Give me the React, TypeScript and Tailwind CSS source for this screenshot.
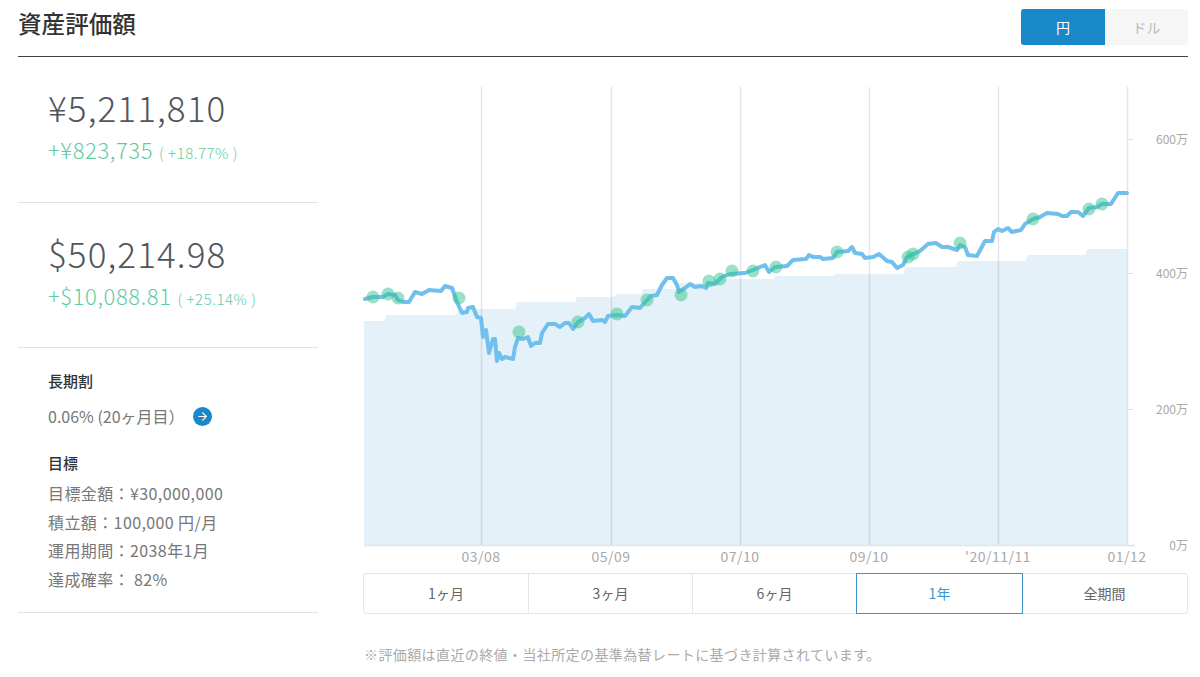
import React from 'react';
import { ArrowRight } from 'lucide-react';

const FONT = '"Noto Sans CJK JP", "Noto Sans", sans-serif';
const COLON = '\uFF1A';

// chart coords: x/y are page pixels minus the svg origin (363, 87)
const OX = 363;
const OY = 87;

const linePoints: [number, number][] = [
  [365, 299], [373, 297], [383, 297], [388, 294], [395, 295], [398, 300], [403, 302], [409, 302], [415, 292], [422, 294],
  [429, 290], [441, 291], [445, 286], [452, 288], [457, 302], [462, 313], [467, 312], [468, 308], [473, 307], [477, 317],
  [481, 318], [483, 337], [486, 330], [489, 353], [493, 339], [495, 339], [497, 361], [499, 353], [502, 359], [505, 357],
  [513, 359], [515, 347], [518, 338], [523, 339], [528, 337], [531, 346], [535, 343], [540, 343], [542, 333], [548, 324],
  [555, 324], [560, 327], [565, 323], [569, 323], [573, 329], [578, 322], [585, 318], [589, 314], [593, 321], [602, 320],
  [605, 322], [608, 316], [617, 315], [625, 316], [632, 307], [640, 308], [647, 300], [651, 296], [657, 295], [662, 285],
  [667, 278], [673, 278], [677, 285], [679, 292], [685, 288], [690, 284], [695, 287], [702, 286], [706, 288], [708, 283],
  [715, 284], [722, 277], [730, 274], [745, 273], [753, 270], [765, 265], [769, 272], [775, 267], [787, 266], [793, 260],
  [806, 259], [809, 255], [813, 257], [820, 257], [823, 259], [833, 258], [837, 252], [848, 251], [852, 247], [855, 253],
  [862, 254], [865, 258], [873, 257], [879, 254], [887, 261], [892, 262], [897, 268], [903, 265], [907, 257], [920, 251],
  [928, 244], [936, 243], [942, 247], [948, 247], [957, 250], [960, 245], [965, 247], [968, 255], [977, 256], [985, 241],
  [992, 241], [994, 232], [998, 229], [1002, 231], [1008, 228], [1012, 232], [1021, 230], [1025, 224], [1033, 219], [1040, 217],
  [1047, 213], [1058, 214], [1062, 216], [1067, 216], [1071, 212], [1078, 212], [1083, 216], [1089, 208], [1097, 207], [1102, 204],
  [1111, 204], [1118, 193], [1127, 193],
];

// [x where the step starts, level after it]
const areaSteps: [number, number][] = [
  [364, 321], [386, 315], [458, 309], [517, 302], [577, 297], [616, 294], [643, 289], [680, 283], [715, 279], [775, 276],
  [835, 274], [905, 267], [958, 261], [1028, 255], [1087, 249],
];

const markers: [number, number][] = [
  [373, 297], [388, 294], [398, 298], [459, 298], [519, 332], [578, 322], [617, 314], [647, 300], [681, 295], [709, 281],
  [720, 279], [732, 271], [753, 271], [776, 267], [837, 252], [908, 257], [913, 254], [960, 243], [1033, 219], [1089, 209], [1102, 204],
];

const gridX = [481, 611, 740, 869, 998, 1127];
const xLabels: [number, string][] = [
  [481, '03/08'], [611, '05/09'], [740, '07/10'], [869, '09/10'], [998, "'20/11/11"], [1127, '01/12'],
];
const yLabels: [number, string][] = [
  [139, '600万'], [273, '400万'], [409, '200万'], [545, '0万'],
];

const linePath = linePoints.map(([x, y]) => `${x - OX},${y - OY}`).join(' ');

const areaPath = (() => {
  let d = `M${364 - OX},${545 - OY}`;
  areaSteps.forEach(([x, y], i) => {
    const prev = i > 0 ? areaSteps[i - 1][1] : null;
    if (prev !== null) d += ` L${x - 2 - OX},${prev - OY}`;
    d += ` L${x - OX},${y - OY}`;
  });
  d += ` L${1127 - OX},${249 - OY} L${1127 - OX},${545 - OY} Z`;
  return d;
})();

const Chart = () => (
  <svg width={825} height={486} viewBox="0 0 825 486" className="block" style={{ fontFamily: FONT }}>
    <path d={areaPath} fill="#e5f1f9" />
    {gridX.map((x) => (
      <line key={x} x1={x - OX + 0.5} x2={x - OX + 0.5} y1={0} y2={458} stroke="#5a6a78" strokeOpacity={0.17} strokeWidth={1.5} />
    ))}
    <line x1={1} x2={772} y1={458.5} y2={458.5} stroke="#dfe5ea" strokeWidth={1.5} />
    {yLabels.map(([y]) => (
      <line key={y} x1={765} x2={770} y1={y - OY + 0.5} y2={y - OY + 0.5} stroke="#dddddd" strokeWidth={1} />
    ))}
    <polyline points={linePath} fill="none" stroke="#70bfec" strokeWidth={4} strokeLinejoin="round" strokeLinecap="round" />
    {markers.map(([x, y], i) => (
      <circle key={i} cx={x - OX} cy={y - OY} r={6.5} fill="#36c48f" fillOpacity={0.5} />
    ))}
    {xLabels.map(([x, t]) => (
      <text key={t} x={x - OX} y={475} textAnchor="middle" fontSize={14} letterSpacing={0.5} fill="#a9a9a9">{t}</text>
    ))}
    {yLabels.map(([y, t]) => (
      <text key={t} x={825} y={y - OY + 5} textAnchor="end" fontSize={12} fill="#a9a9a9">{t}</text>
    ))}
  </svg>
);

const AmountBlock = ({ main, diff, rate, className }: { main: string; diff: string; rate: string; className: string }) => (
  <div className={`border-b border-[#e2e2e2] pl-[30px] pt-[27px] ${className}`}>
    <div className="text-[35px] leading-[46px] font-light tracking-[1.1px] text-[#50565c]">{main}</div>
    <div className="mt-[5px] flex items-baseline text-[#5fcb9f]">
      <span className="text-[22px] leading-[28px] font-light tracking-[0.6px]">{diff}</span>
      <span className="ml-[6px] text-[15px] font-light tracking-[0.5px]">( {rate} )</span>
    </div>
  </div>
);

const periods = ['1ヶ月', '3ヶ月', '6ヶ月', '1年', '全期間'];

export default function App() {
  return (
    <div className="w-[1200px] h-[677px] overflow-hidden bg-white pr-[12px] pl-[18px]" style={{ fontFamily: FONT }}>
      <div className="flex h-[57px] items-start justify-between border-b border-[#444444]">
        <h1 className="mt-[6px] text-[23.6px] leading-[34px] font-medium text-[#333333]">資産評価額</h1>
        <div className="mt-[9px] flex h-[36px] w-[167px] text-[14px]">
          <div className="flex w-[84px] items-center justify-center rounded-l-[3px] bg-[#1888c8] text-white">円</div>
          <div className="flex flex-1 items-center justify-center rounded-r-[3px] bg-[#f6f6f6] text-[#bbbbbb]">ドル</div>
        </div>
      </div>

      <div className="flex">
        <div className="w-[300px] shrink-0">
          <AmountBlock className="h-[146px]" main="¥5,211,810" diff="+¥823,735" rate="+18.77%" />
          <AmountBlock className="h-[145px]" main="$50,214.98" diff="+$10,088.81" rate="+25.14%" />
          <div className="h-[265px] border-b border-[#e2e2e2] pl-[30px] pt-[21px]">
            <div className="text-[15px] leading-[24px] font-medium text-[#333333]">長期割</div>
            <div className="mt-[11px] flex items-center text-[16px] leading-[24px] text-[#777777]">
              <span>0.06% (20ヶ月目{'\uFF09'}</span>
              <span className="ml-[8px] flex h-[19px] w-[19px] items-center justify-center rounded-full bg-[#1888c8]">
                <ArrowRight size={13} color="#ffffff" strokeWidth={2} />
              </span>
            </div>
            <div className="mt-[23px] text-[15px] leading-[24px] font-medium text-[#333333]">目標</div>
            <div className="mt-[4px] text-[16px] leading-[28.5px] tracking-[0.4px] text-[#777777]">
              <div>目標金額{COLON}¥30,000,000</div>
              <div>積立額{COLON}100,000 円/月</div>
              <div>運用期間{COLON}2038年1月</div>
              <div>達成確率{COLON} 82%</div>
            </div>
          </div>
        </div>

        <div className="ml-[45px] w-[825px]">
          <div className="mt-[30px]">
            <Chart />
          </div>
          <div className="flex h-[41px] rounded-[3px] border border-[#e5e5e5] text-[14px] text-[#666666]">
            {periods.map((p, i) => (
              <div
                key={p}
                className={
                  i === 3
                    ? 'm-[-1px] flex w-[167px] items-center justify-center border border-[#3b94cc] text-[#3b94cc]'
                    : i === 4
                      ? 'flex flex-1 items-center justify-center'
                      : i === 0
                        ? 'flex w-[165px] items-center justify-center border-r border-[#e5e5e5]'
                        : 'flex w-[164px] items-center justify-center border-r border-[#e5e5e5]'
                }
              >
                {p}
              </div>
            ))}
          </div>
          <p className="mt-[30px] pl-[1px] text-[14px] leading-[20px] tracking-[0.4px] text-[#aaaaaa]">
            ※評価額は直近の終値・当社所定の基準為替レートに基づき計算されています。
          </p>
        </div>
      </div>
    </div>
  );
}
